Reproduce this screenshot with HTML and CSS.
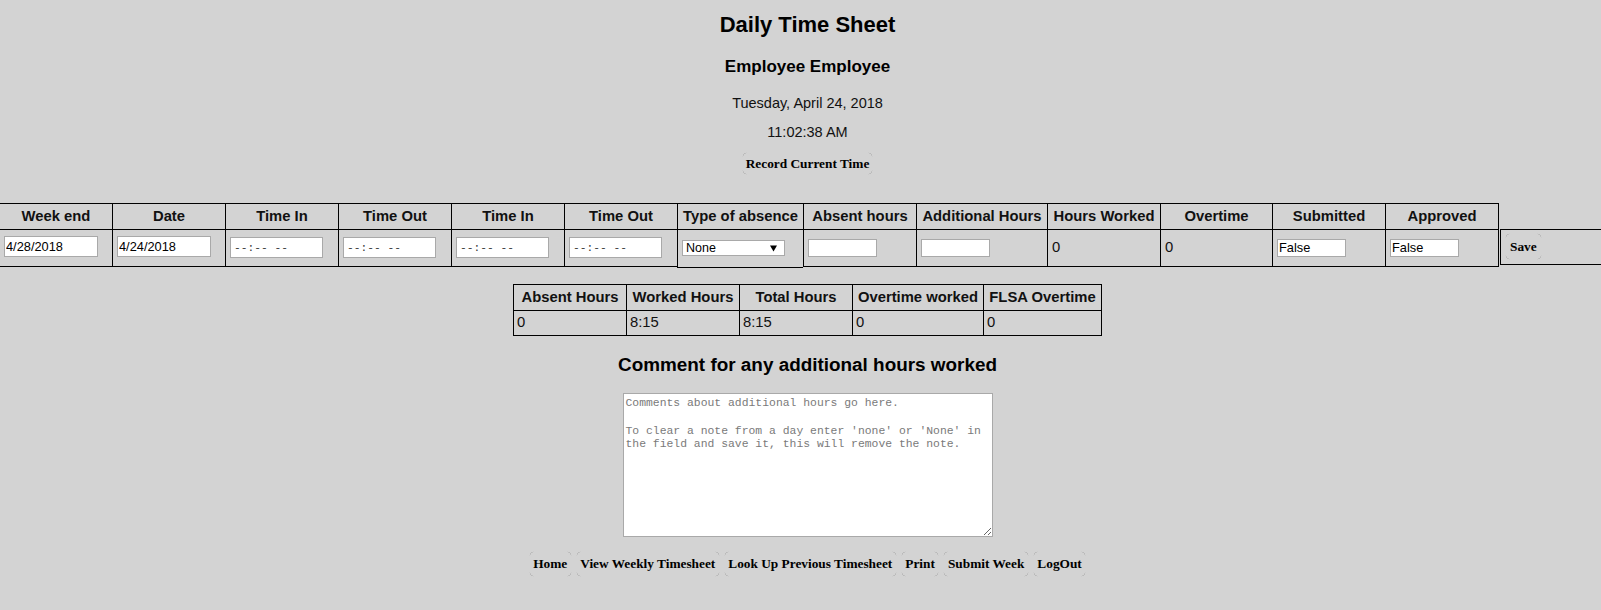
FILE: index.html
```html
<!DOCTYPE html>
<html lang="en">
<head>
<meta charset="utf-8">
<title>Daily Time Sheet</title>
<link rel="stylesheet" href="styles.css">
</head>
<body>
<div class="page">
  <h1 class="title">Daily Time Sheet</h1>
  <h2 class="employee">Employee Employee</h2>
  <p class="date">Tuesday, April 24, 2018</p>
  <p class="clock">11:02:38 AM</p>
  <div class="record-row"><button class="btn" type="button">Record Current Time</button></div>

  <div class="sheet">
    <div class="th">Week end</div>
    <div class="th">Date</div>
    <div class="th">Time In</div>
    <div class="th">Time Out</div>
    <div class="th">Time In</div>
    <div class="th">Time Out</div>
    <div class="th">Type of absence</div>
    <div class="th">Absent hours</div>
    <div class="th">Additional Hours</div>
    <div class="th">Hours Worked</div>
    <div class="th">Overtime</div>
    <div class="th">Submitted</div>
    <div class="th">Approved</div>
    <div class="th-blank"></div>

    <div class="td"><input class="in in-date" type="text" value="4/28/2018"></div>
    <div class="td"><input class="in in-date" type="text" value="4/24/2018"></div>
    <div class="td"><input class="in in-time" type="text" placeholder="--:-- --"></div>
    <div class="td"><input class="in in-time" type="text" placeholder="--:-- --"></div>
    <div class="td"><input class="in in-time" type="text" placeholder="--:-- --"></div>
    <div class="td"><input class="in in-time" type="text" placeholder="--:-- --"></div>
    <div class="td td-absence">
      <div class="sel"><span>None</span><svg class="sel-arrow" width="7" height="7" viewBox="0 0 7 7"><polygon points="0,0.5 7,0.5 3.5,6.5" fill="#000"/></svg></div>
    </div>
    <div class="td"><input class="in in-sm" type="text" value=""></div>
    <div class="td"><input class="in in-sm" type="text" value=""></div>
    <div class="td td-text">0</div>
    <div class="td td-text">0</div>
    <div class="td"><input class="in in-sm" type="text" value="False"></div>
    <div class="td"><input class="in in-sm" type="text" value="False"></div>
    <div class="td-save"><div class="save-box"><button class="btn btn-save" type="button">Save</button></div></div>
  </div>

  <div class="summary">
    <div class="sh">Absent Hours</div>
    <div class="sh">Worked Hours</div>
    <div class="sh">Total Hours</div>
    <div class="sh">Overtime worked</div>
    <div class="sh sh-last">FLSA Overtime</div>
    <div class="sd">0</div>
    <div class="sd">8:15</div>
    <div class="sd">8:15</div>
    <div class="sd">0</div>
    <div class="sd sd-last">0</div>
  </div>

  <h3 class="comment-title">Comment for any additional hours worked</h3>
  <textarea class="comment" placeholder="Comments about additional hours go here.&#10;&#10;To clear a note from a day enter 'none' or 'None' in the field and save it, this will remove the note."></textarea>

  <nav class="actions">
    <button class="btn btn-nav" type="button">Home</button>
    <button class="btn btn-nav" type="button">View Weekly Timesheet</button>
    <button class="btn btn-nav" type="button">Look Up Previous Timesheet</button>
    <button class="btn btn-nav" type="button">Print</button>
    <button class="btn btn-nav" type="button">Submit Week</button>
    <button class="btn btn-nav" type="button">LogOut</button>
  </nav>
</div>
</body>
</html>
```

FILE: styles.css
```css
html, body {
  margin: 0;
  padding: 0;
  overflow: hidden;
  background: #d3d3d3;
}

body {
  font-family: "Liberation Sans", Arial, sans-serif;
  color: #000;
}

.page {
  width: 1615px;
  text-align: center;
}

.title {
  margin: 12px 0 0;
  font-size: 22px;
  line-height: 25px;
  font-weight: bold;
}

.employee {
  margin: 20px 0 0;
  font-size: 17px;
  line-height: 20px;
  font-weight: bold;
}

.date {
  margin: 18px 0 0;
  font-size: 14.5px;
  line-height: 17px;
  color: #111;
}

.clock {
  margin: 12px 0 0;
  font-size: 14.5px;
  line-height: 17px;
  color: #111;
}

.record-row {
  display: flex;
  justify-content: center;
  margin-top: 10.5px;
}

/* buttons with faint rounded corner marks */
.btn {
  --arc: rgba(150, 150, 150, 0.7);
  margin: 0;
  padding: 3px 3px;
  border: 1px solid transparent;
  font-family: "Liberation Serif", "Times New Roman", serif;
  font-weight: bold;
  font-size: 13.33px;
  line-height: 15px;
  color: #000;
  background:
    radial-gradient(circle at 100% 100%, transparent 3.6px, var(--arc) 4.1px, transparent 4.6px) left top / 5px 5px no-repeat,
    radial-gradient(circle at 0 100%, transparent 3.6px, var(--arc) 4.1px, transparent 4.6px) right top / 5px 5px no-repeat,
    radial-gradient(circle at 100% 0, transparent 3.6px, var(--arc) 4.1px, transparent 4.6px) left bottom / 5px 5px no-repeat,
    radial-gradient(circle at 0 0, transparent 3.6px, var(--arc) 4.1px, transparent 4.6px) right bottom / 5px 5px no-repeat;
  background-origin: border-box;
  white-space: nowrap;
}

.btn-nav {
  padding: 4.5px 3.5px;
}

.btn-save {
  padding: 5px 4px;
}

/* main time sheet grid */
.sheet {
  display: grid;
  grid-template-columns: 113px 113px 113px 113px 113px 113px 126px 113px 131px 113px 112px 113px 113px 1fr;
  margin: 28px 0 0 -1px;
  text-align: left;
}

.th {
  box-sizing: border-box;
  height: 26px;
  border-top: 1px solid #000;
  border-left: 1px solid #000;
  display: flex;
  align-items: center;
  justify-content: center;
  font-weight: bold;
  font-size: 14.8px;
  line-height: 17px;
  white-space: nowrap;
  color: #111;
}

.th-blank {
  box-sizing: border-box;
  height: 26px;
  border-left: 1px solid #000;
}

.td {
  box-sizing: border-box;
  height: 38px;
  border-top: 1px solid #000;
  border-left: 1px solid #000;
  border-bottom: 1px solid #000;
  display: flex;
  align-items: center;
  padding-left: 4px;
}

.td-absence {
  height: 39px;
  margin-bottom: -1px;
}

.td-text {
  font-size: 14.8px;
  line-height: 17px;
  color: #111;
}

.td-save {
  box-sizing: border-box;
  height: 38px;
  border-left: 1px solid #000;
}

.save-box {
  box-sizing: border-box;
  height: 36px;
  margin-left: 1px;
  border-top: 1px solid #000;
  border-left: 1px solid #000;
  border-bottom: 1px solid #000;
  display: flex;
  align-items: center;
  padding-left: 4px;
}

.in {
  box-sizing: border-box;
  margin: 0;
  border: 1px solid #a9a9a9;
  background: #fff;
  font-family: "Liberation Sans", Arial, sans-serif;
  font-size: 12.8px;
  color: #000;
  padding: 0 1px;
  outline: none;
}

.in-date {
  width: 94px;
  height: 21px;
  margin-bottom: 3px;
}

.in-time {
  width: 93px;
  height: 21px;
  padding-left: 3px;
  font-family: "Liberation Mono", "Courier New", monospace;
  font-size: 11.25px;
}

.in-time::placeholder {
  color: #3a3a3a;
  opacity: 1;
}

.in-sm {
  width: 69px;
  height: 18px;
}

.sel {
  box-sizing: border-box;
  width: 103px;
  height: 16px;
  border: 1px solid #a9a9a9;
  background: #fff;
  display: flex;
  align-items: center;
  justify-content: space-between;
  padding: 0 7px 0 3px;
  font-size: 12.5px;
  line-height: 14px;
}

.sel-arrow {
  display: block;
}

/* summary table */
.summary {
  display: grid;
  grid-template-columns: 113px 113px 113px 131px 119px;
  width: fit-content;
  margin: 17px auto 0;
  text-align: left;
}

.sh {
  box-sizing: border-box;
  height: 26px;
  border-top: 1px solid #000;
  border-left: 1px solid #000;
  display: flex;
  align-items: center;
  justify-content: center;
  font-weight: bold;
  font-size: 14.8px;
  line-height: 17px;
  white-space: nowrap;
  color: #111;
}

.sd {
  box-sizing: border-box;
  height: 26px;
  border-top: 1px solid #000;
  border-left: 1px solid #000;
  border-bottom: 1px solid #000;
  display: flex;
  align-items: center;
  padding-left: 3px;
  font-size: 14.8px;
  line-height: 17px;
  color: #111;
}

.sh-last,
.sd-last {
  border-right: 1px solid #000;
}

.comment-title {
  margin: 18.4px 0 0;
  font-size: 18.9px;
  line-height: 22px;
  font-weight: bold;
}

.comment {
  display: block;
  box-sizing: border-box;
  width: 370px;
  height: 144px;
  margin: 17px auto 0;
  padding: 3px 2px 2px;
  border: 1px solid #a9a9a9;
  background: #fff;
  font-family: "Liberation Mono", "Courier New", monospace;
  font-size: 11.4px;
  line-height: 13.85px;
  text-align: left;
}

.comment::placeholder {
  color: #7a7a7a;
  opacity: 1;
}

.actions {
  display: flex;
  justify-content: center;
  gap: 4px;
  margin-top: 14px;
}
```
